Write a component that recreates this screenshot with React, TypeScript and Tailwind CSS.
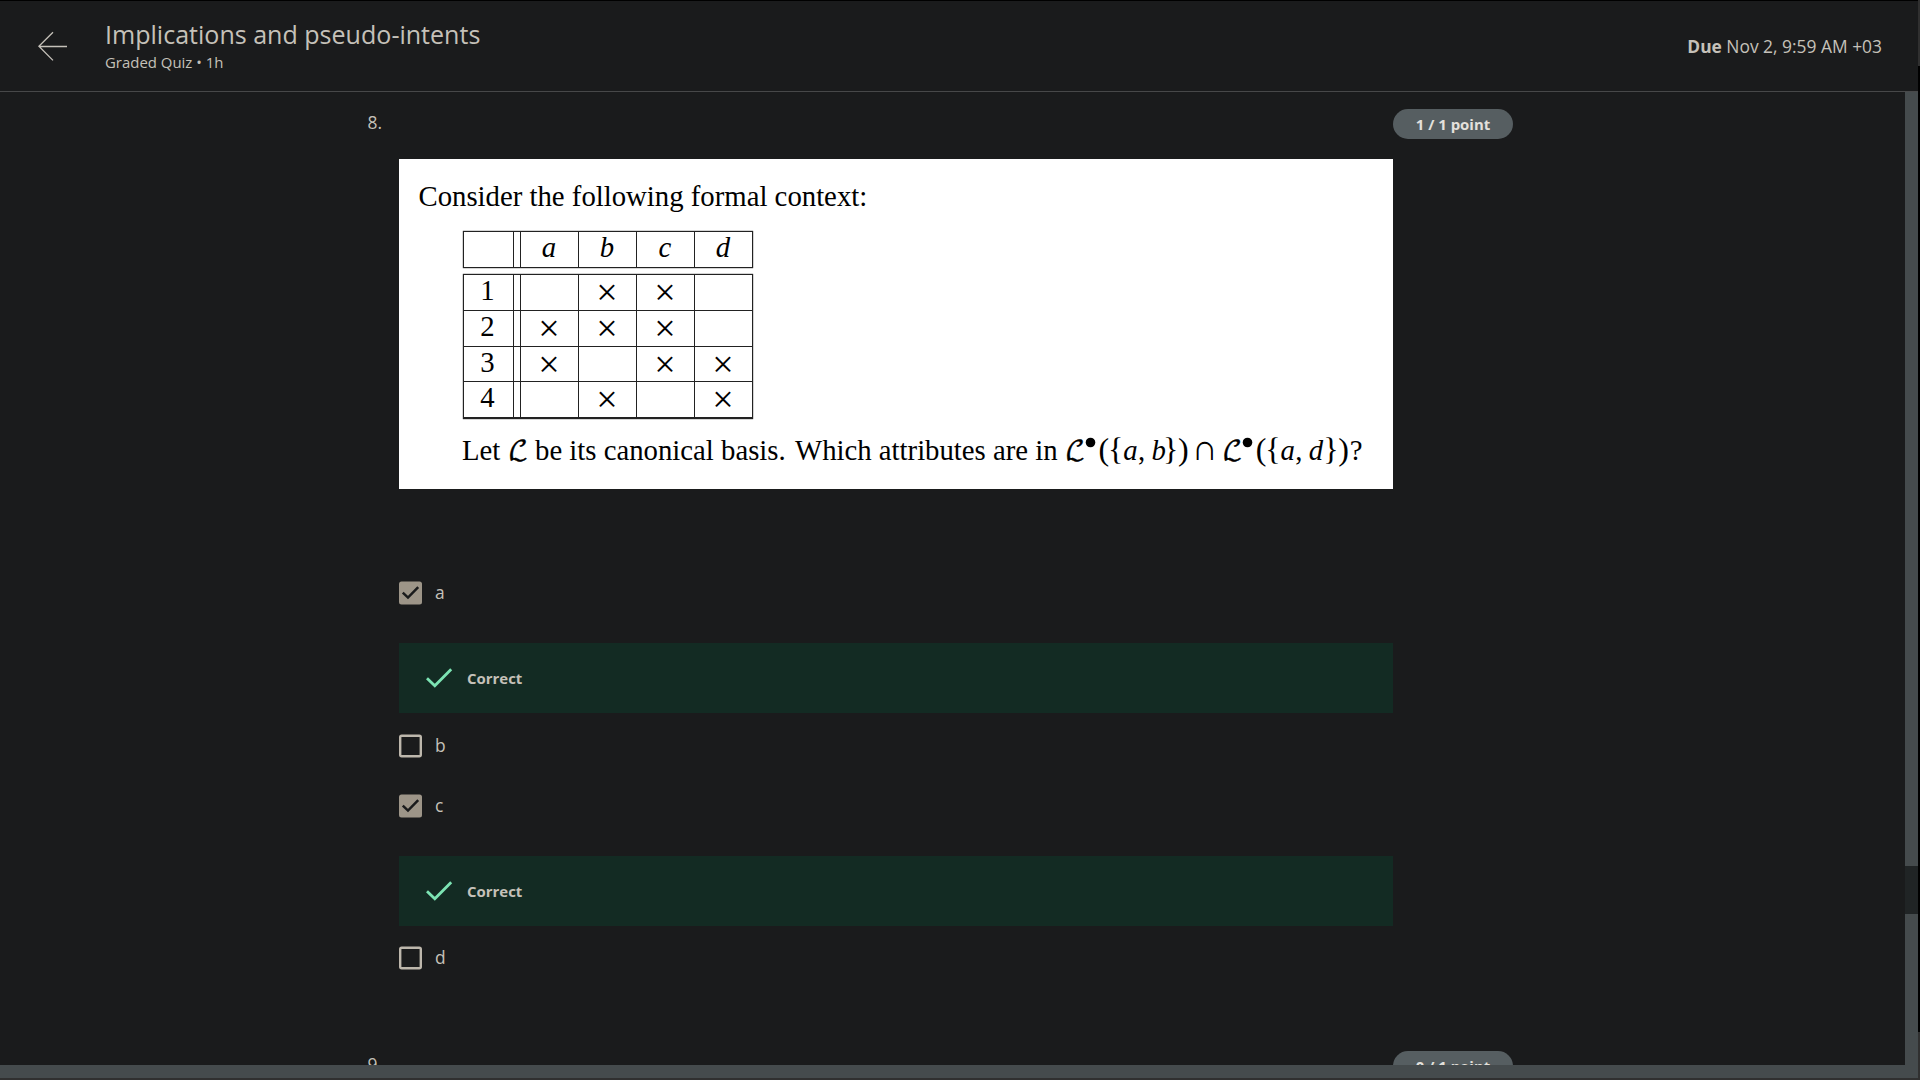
import React from 'react';

const columns = ['a', 'b', 'c', 'd'];
const rows = [
  { id: '1', marks: [false, true, true, false] },
  { id: '2', marks: [true, true, true, false] },
  { id: '3', marks: [true, false, true, true] },
  { id: '4', marks: [false, true, false, true] },
];

function BackArrow() {
  return (
    <svg width="30" height="30" viewBox="0 0 30 30" fill="none" stroke="#c5c1b9" strokeWidth="1.3" className="shrink-0">
      <path d="M29 15.5H1M15 1.2L0.9 15.3L15 29.4" />
    </svg>
  );
}

function PointPill({ text }: { text: string }) {
  return (
    <div className="flex h-[30px] w-[120px] items-center justify-center rounded-full bg-[#565e61] text-[14.95px] font-bold whitespace-nowrap text-[#e4e1dc]">
      {text}
    </div>
  );
}

function QuestionHead({ number, points }: { number: string; points: string }) {
  return (
    <div className="flex h-[50px] items-start">
      <div className="w-[1026px] pt-px pl-[0.5px] text-[17.4px] leading-[24px]">{number}</div>
      <PointPill text={points} />
    </div>
  );
}

function Option({ label, checked }: { label: string; checked?: boolean }) {
  return (
    <div className="flex h-6 items-center">
      <svg width="24" height="24" viewBox="0 0 24 24" fill="none">
        {checked ? (
          <>
            <rect x="0" y="0.5" width="23" height="23" rx="2.5" fill="#9d9588" />
            <path d="M3.8 11.6L9 16.6L19.2 6.2" stroke="#1a1b1c" strokeWidth="2.5" />
          </>
        ) : (
          <rect x="1.2" y="1.7" width="20.6" height="20.6" rx="1.5" stroke="#bdb7ac" strokeWidth="2.4" />
        )}
      </svg>
      <span className="mb-[2px] ml-3 text-[17.4px] leading-[22px]">{label}</span>
    </div>
  );
}

function Correct() {
  return (
    <div className="flex h-[70px] w-[994px] items-center bg-[#132b23] pl-[27px]">
      <svg width="28" height="22" viewBox="0 0 28 22" fill="none">
        <path d="M1 11.2L8.8 18.8L25.2 2.2" stroke="#7ce3b3" strokeWidth="2.8" />
      </svg>
      <span className="ml-[13px] text-[14.95px] font-bold">Correct</span>
    </div>
  );
}

function ContextRow({ head, cells, italic }: { head: string; cells: string[]; italic?: boolean }) {
  return (
    <div className="flex h-full w-full gap-[6px]">
      <div className="flex w-[51px] justify-center border-x border-[#222] pr-[2px] leading-[30px]">{head}</div>
      <div className="flex border-r border-[#222]">
        {cells.map((c, i) => (
          <div key={i} className="flex h-full w-[58px] justify-center border-l border-[#222] pr-px leading-[31px]">
            {italic ? <i>{c}</i> : <span className="text-[38px] leading-[34px]">{c}</span>}
          </div>
        ))}
      </div>
    </div>
  );
}

function ScriptL() {
  return (
    <span className="font-['DejaVu_Math_TeX_Gyre'] text-[27px] [-webkit-text-stroke:0.3px_black]">ℒ</span>
  );
}

function Operand({ first, second }: { first: string; second: string }) {
  return (
    <>
      <span className="w-[20px]"><ScriptL /></span>
      <span className="w-[13.5px]">
        <svg width="11" height="11" viewBox="0 0 11 11" className="relative -top-[11px] inline-block">
          <circle cx="5.5" cy="5.5" r="4.8" fill="#000" />
        </svg>
      </span>
      <span className="w-[9.5px] text-[32px]">(</span>
      <span className="w-[15.3px] text-[32px]">{'{'}</span>
      <i className="w-[14.7px]">{first}</i>
      <span className="w-[13.5px]">,</span>
      <i className={second === 'd' ? 'w-[14.5px]' : 'w-[11.5px]'}>{second}</i>
      <span className="w-[15px] text-[32px]">{'}'}</span>
      <span className="w-[9px] text-[32px]">)</span>
    </>
  );
}

function ContextFigure() {
  return (
    <div className="h-[330px] w-[994px] overflow-hidden bg-white font-['Liberation_Serif'] text-[28.75px] text-black">
      <p className="h-[72px] pt-[19px] pl-[19.5px] leading-[36px] whitespace-nowrap">Consider the following formal context:</p>
      <div className="ml-[64px] w-[290px]">
        <div className="h-[37px] border-y border-[#222] shadow-[0_0_1px_#000]">
          <ContextRow head="" cells={columns} italic />
        </div>
        <div className="mt-[6px] border-y border-b-2 border-[#222] shadow-[0_0_1px_#000]">
          {rows.map((r, i) => (
            <div key={r.id} className={i ? 'h-[35.67px] border-t border-[#222]' : 'h-[35px]'}>
              <ContextRow head={r.id} cells={r.marks.map((m) => (m ? '×' : ''))} />
            </div>
          ))}
        </div>
      </div>
      <p className="mt-[11px] ml-[63px] flex items-baseline leading-[36px] whitespace-nowrap">
        <span className="w-[46px]">Let</span>
        <span className="w-[27px]"><ScriptL /></span>
        <span className="w-[260px]">be its canonical basis.</span>
        <span className="w-[270px]">Which attributes are in</span>
        <Operand first="a" second="b" />
        <span className="flex w-[35.3px] justify-center text-[36px]">∩</span>
        <Operand first="a" second="d" />
        <span className="ml-[2.5px]">?</span>
      </p>
    </div>
  );
}

export default function App() {
  return (
    <div className="flex h-[1080px] w-[1920px] overflow-hidden bg-[#1a1b1c] font-['Open_Sans',sans-serif] text-[#c5c1b9]">
      <div className="flex w-[1918px] flex-col">
        <header className="flex h-[92px] shrink-0 items-center border-t border-b border-t-black border-b-[#474849] pr-9 pl-[38px]">
          <BackArrow />
          <div className="ml-[37px] flex-1">
            <h1 className="text-[25.05px] leading-[30px]">Implications and pseudo-intents</h1>
            <p className="pt-[2px] text-[14.95px] leading-[22px]">Graded Quiz • 1h</p>
          </div>
          <div className="text-[17.4px] leading-6"><b>Due</b> Nov 2, 9:59 AM +03</div>
        </header>
        <div className="flex h-[973px] shrink-0">
          <main className="h-full w-[1905px] overflow-hidden pt-[17px] pl-[367px]">
            <QuestionHead number="8." points="1 / 1 point" />
            <div className="pl-8">
              <ContextFigure />
              <div className="pt-[92px]">
                <Option label="a" checked />
                <div className="pt-[38px] pb-[21px]"><Correct /></div>
                <Option label="b" />
                <div className="h-9" />
                <Option label="c" checked />
                <div className="pt-[38px] pb-5"><Correct /></div>
                <Option label="d" />
              </div>
            </div>
            <div className="h-[82px]" />
            <div className="-mt-px">
              <QuestionHead number="9." points="0 / 1 point" />
            </div>
          </main>
          <div className="flex w-[13px] flex-col bg-[#454b4d]">
            <div className="mt-[774px] h-12 bg-[#202425]" />
          </div>
        </div>
        <div className="h-[13px] shrink-0 bg-[#454b4d]" />
        <div className="h-[2px] shrink-0 bg-[#303030]" />
      </div>
      <div className="flex w-[2px] flex-col bg-[#303030]">
        <div className="mt-[66px] h-[966px] bg-black" />
      </div>
    </div>
  );
}
